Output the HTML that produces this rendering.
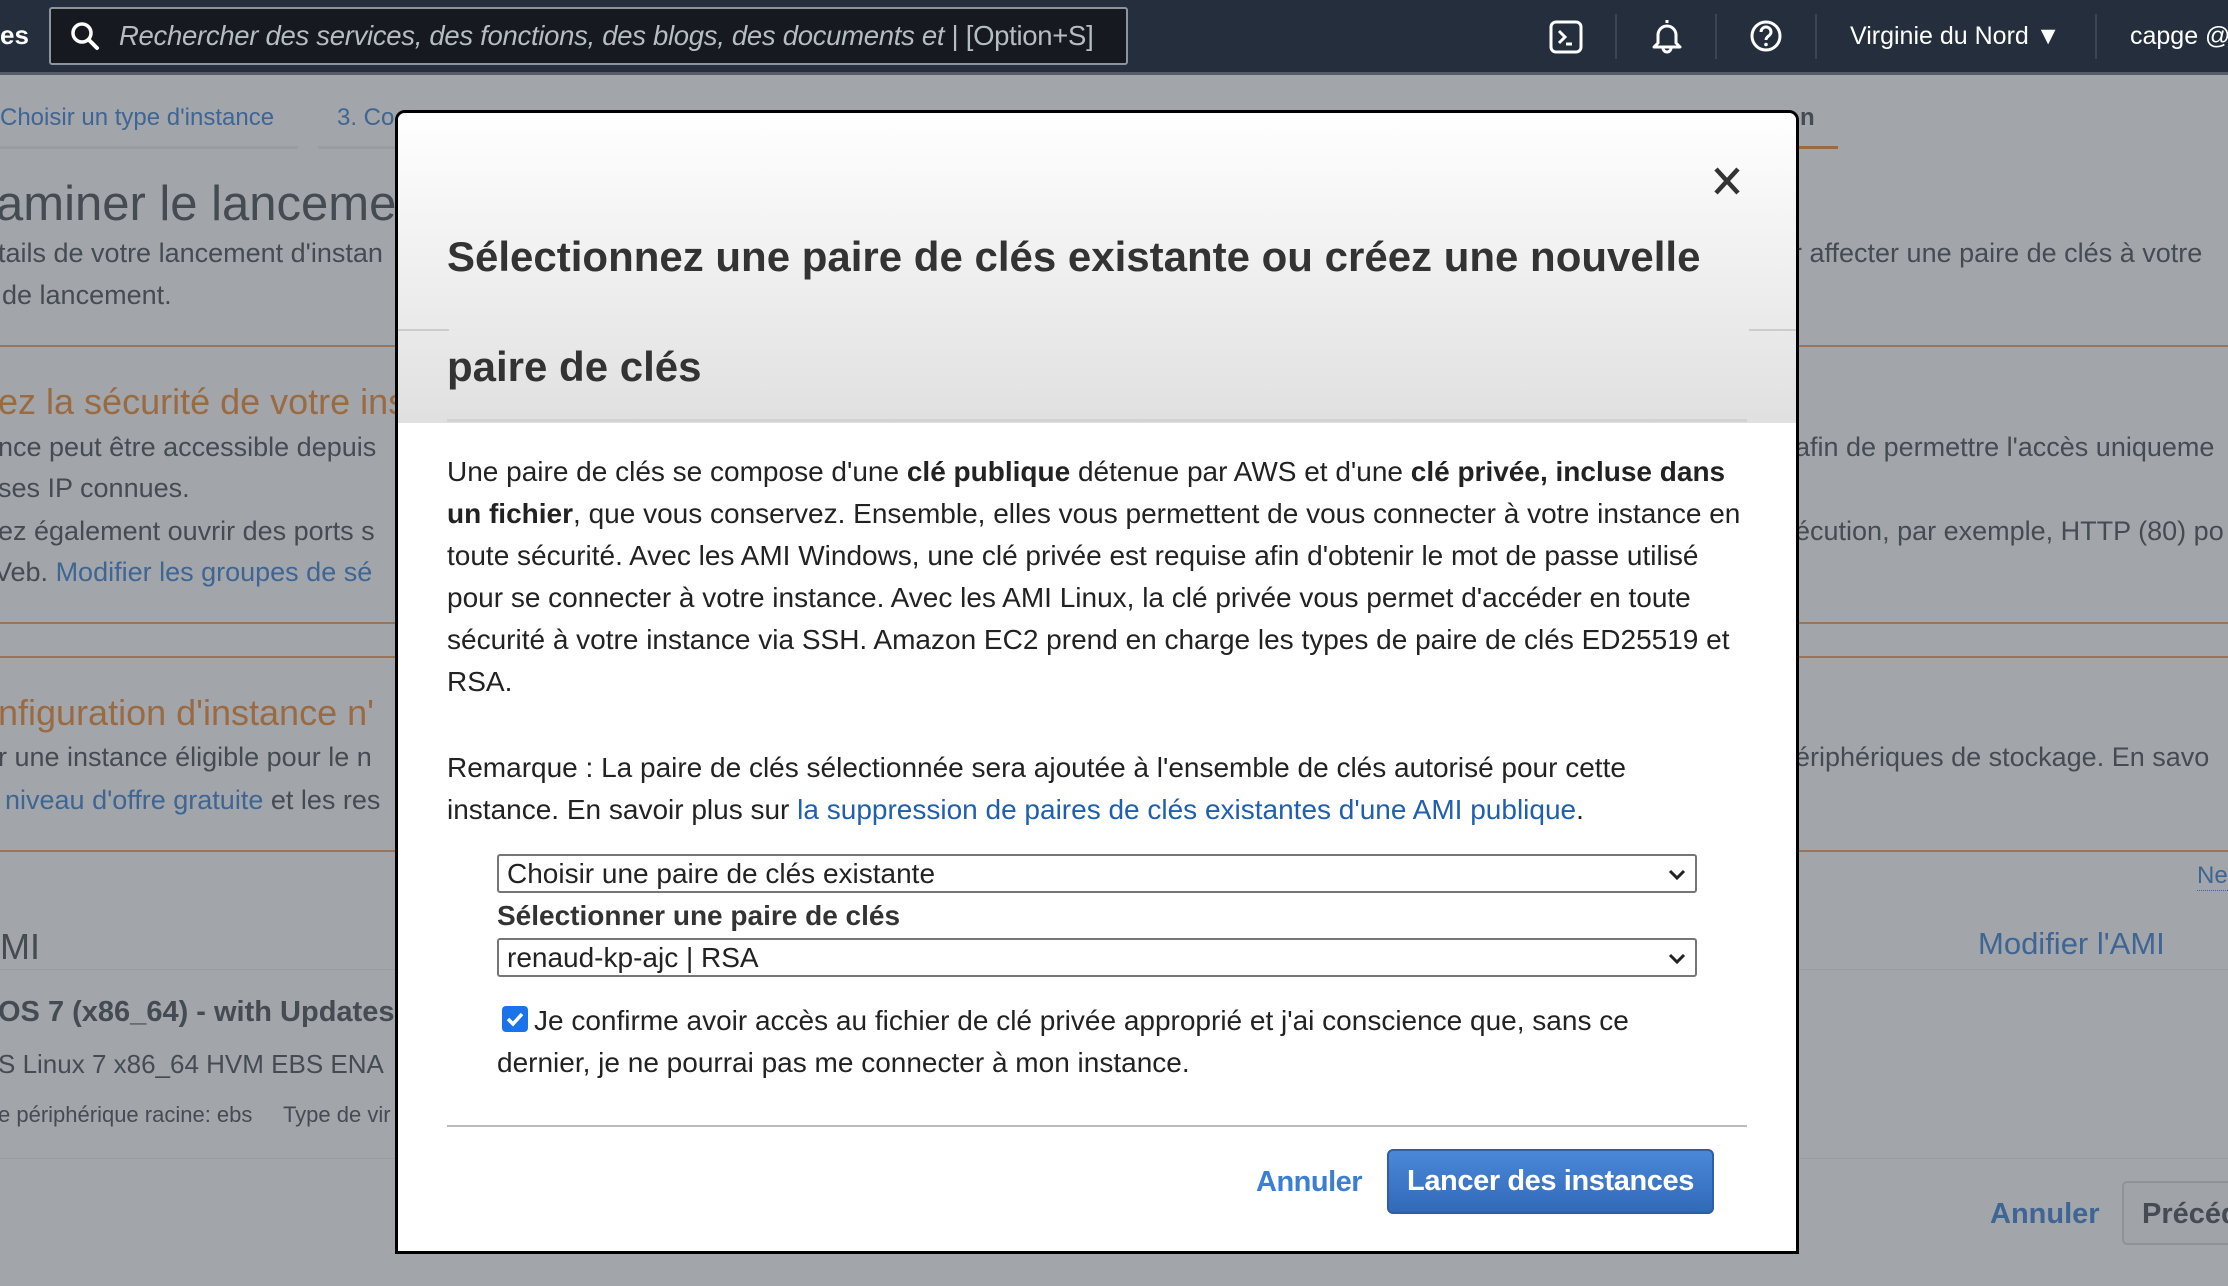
<!DOCTYPE html>
<html><head><meta charset="utf-8"><style>
*{margin:0;padding:0;box-sizing:border-box}
body{width:2228px;height:1286px;overflow:hidden;background:#a2a6aa;font-family:"Liberation Sans",Arial,sans-serif;position:relative}
.a{position:absolute;white-space:nowrap}
.d{color:#454b52}
.l{color:#3e6594}
.o{color:#9a6a42}
.hl{position:absolute;height:2px}
#nav{position:absolute;left:0;top:0;width:2228px;height:75px;background:#242e3d;border-bottom:3px solid #555c66}
.sep{position:absolute;top:14px;width:2px;height:45px;background:#3c4653}
#modal{position:absolute;left:395px;top:110px;width:1404px;height:1144px;background:#fff;border:3px solid #000;border-radius:10px 10px 0 0;overflow:hidden}
#mh{position:absolute;left:0;top:0;width:100%;height:310px;background:linear-gradient(#fff,#e0e0e0)}
.t{font-size:28px;color:#222;line-height:42px}
.sel{position:absolute;left:99px;width:1200px;height:39px;border:2px solid #767676;border-radius:3px;background:#fff;font-size:28px;color:#222;padding-left:8px;line-height:35px}
.sel svg{position:absolute;right:8px;top:12px}
</style></head><body>
<div id="nav">
<div class="a" style="left:0;top:20px;color:#fff;font-size:26px;font-weight:bold">es</div>
<div style="position:absolute;left:49px;top:7px;width:1079px;height:58px;border:2px solid #8d949c;border-radius:3px;background:#16191f"></div>
<svg class="a" style="left:70px;top:21px" width="30" height="30" viewBox="0 0 30 30"><circle cx="12" cy="12" r="9" fill="none" stroke="#fff" stroke-width="3.5"/><path d="M19 19L27 27" stroke="#fff" stroke-width="4" stroke-linecap="round"/></svg>
<div class="a" style="left:119px;top:20px;font-size:27.5px;font-style:italic;color:#b4bcc4;letter-spacing:-0.3px">Rechercher des services, des fonctions, des blogs, des documents et <span style="font-style:normal">|</span> <span style="font-style:normal">[Option+S]</span></div>
<svg class="a" style="left:1549px;top:20px" width="34" height="34" viewBox="0 0 34 34"><rect x="2" y="2" width="30" height="30" rx="5" fill="none" stroke="#fff" stroke-width="3"/><path d="M10 11l6 6-6 6M17 24h6" fill="none" stroke="#fff" stroke-width="3"/></svg>
<div class="sep" style="left:1615px"></div>
<svg class="a" style="left:1650px;top:17px" width="34" height="40" viewBox="0 0 34 40"><path d="M17 3v3M8 26V18a9 9 0 0118 0v8l4 4H4z" fill="none" stroke="#fff" stroke-width="3" stroke-linejoin="round"/><path d="M13 31a4 4 0 008 0" fill="none" stroke="#fff" stroke-width="3"/></svg>
<div class="sep" style="left:1715px"></div>
<svg class="a" style="left:1749px;top:19px" width="34" height="34" viewBox="0 0 34 34"><circle cx="17" cy="17" r="14" fill="none" stroke="#fff" stroke-width="3"/><path d="M12 13a5 5 0 0110 0c0 4-5 4-5 8" fill="none" stroke="#fff" stroke-width="3"/><circle cx="17" cy="25.5" r="1.8" fill="#fff"/></svg>
<div class="sep" style="left:1815px"></div>
<div class="a" style="left:1850px;top:22px;color:#fff;font-size:25px">Virginie du Nord ▼</div>
<div class="sep" style="left:2095px"></div>
<div class="a" style="left:2130px;top:22px;color:#fff;font-size:25px">capge @</div>
</div>

<div class="a l" style="left:0;top:104px;font-size:24px">Choisir un type d'instance</div>
<div class="hl" style="left:0;top:146px;width:298px;background:#999da2;height:3px"></div>
<div class="hl" style="left:318px;top:146px;width:80px;background:#999da2;height:3px"></div>
<div class="a l" style="left:337px;top:104px;font-size:24px">3. Co</div>
<div class="a" style="left:1800px;top:104px;font-size:24px;color:#454b52;font-weight:bold">n</div>
<div class="hl" style="left:1798px;top:146px;width:40px;background:#9a6a42;height:3px"></div>
<div class="a d" style="left:-4px;top:176px;font-size:49px">aminer le lancemen</div>
<div class="a d" style="left:-2px;top:238px;font-size:27px">tails de votre lancement d'instan</div>
<div class="a d" style="left:2px;top:280px;font-size:27px">de lancement.</div>
<div class="a d" style="left:1793px;top:238px;font-size:27px">r affecter une paire de clés à votre</div>
<div class="hl" style="left:0;top:345px;width:2228px;background:#9a7456"></div>
<div class="a o" style="left:-2px;top:381px;font-size:36px">ez la sécurité de votre ins</div>
<div class="a d" style="left:-2px;top:432px;font-size:27px">nce peut être accessible depuis</div>
<div class="a d" style="left:-2px;top:473px;font-size:27px">ses IP connues.</div>
<div class="a d" style="left:-2px;top:516px;font-size:27px">ez également ouvrir des ports s</div>
<div class="a d" style="left:-6px;top:557px;font-size:27px">Veb. <span class="l">Modifier les groupes de sé</span></div>
<div class="a d" style="left:1795px;top:432px;font-size:27px">afin de permettre l'accès uniqueme</div>
<div class="a d" style="left:1795px;top:516px;font-size:27px">écution, par exemple, HTTP (80) po</div>
<div class="hl" style="left:0;top:622px;width:2228px;background:#9a7456"></div>
<div class="hl" style="left:0;top:656px;width:2228px;background:#9a7456"></div>
<div class="a o" style="left:-2px;top:692px;font-size:36px">nfiguration d'instance n'</div>
<div class="a d" style="left:-2px;top:742px;font-size:27px">r une instance éligible pour le n</div>
<div class="a d" style="left:5px;top:785px;font-size:27px"><span class="l">niveau d'offre gratuite</span> et les res</div>
<div class="a d" style="left:1795px;top:742px;font-size:27px">ériphériques de stockage. En savo</div>
<div class="hl" style="left:0;top:850px;width:2228px;background:#9a7456"></div>
<div class="a l" style="left:2197px;top:862px;font-size:24px;border-bottom:1px dotted #3e6594">Ne</div>
<div class="a d" style="left:0;top:926px;font-size:36px">MI</div>
<div class="a l" style="left:1978px;top:926px;font-size:31px">Modifier l'AMI</div>
<div class="hl" style="left:0;top:969px;width:2228px;background:#999da2;height:1px"></div>
<div class="a d" style="left:-2px;top:996px;font-size:29px;font-weight:bold">OS 7 (x86_64) - with Updates</div>
<div class="a d" style="left:-2px;top:1049px;font-size:26px">S Linux 7 x86_64 HVM EBS ENA</div>
<div class="a d" style="left:-2px;top:1102px;font-size:22px">e périphérique racine: ebs &nbsp;&nbsp;&nbsp;&nbsp;Type de vir</div>
<div class="hl" style="left:0;top:1158px;width:2228px;background:#999da2;height:1px"></div>
<div class="a l" style="left:1990px;top:1198px;font-size:29px;font-weight:bold">Annuler</div>
<div style="position:absolute;left:2122px;top:1181px;width:140px;height:64px;border:2px solid #8f9398;border-radius:5px;background:#a0a4a8"></div>
<div class="a d" style="left:2142px;top:1198px;font-size:29px;font-weight:bold">Précéd</div>

<div id="modal">
<div id="mh"></div>
<div class="hl" style="left:0;top:216px;width:51px;background:#ccc"></div>
<div class="hl" style="left:1351px;top:216px;width:53px;background:#ccc"></div>
<div class="hl" style="left:49px;top:306px;width:1300px;background:#d2d2d2;height:3px"></div>
<svg class="a" style="left:1315px;top:53px" width="28" height="30" viewBox="0 0 28 30"><path d="M3 3L25 27M25 3L3 27" stroke="#333" stroke-width="4.5"/></svg>
<div class="a" style="left:49px;top:120px;font-size:42px;font-weight:bold;color:#333">Sélectionnez une paire de clés existante ou créez une nouvelle</div>
<div class="a" style="left:49px;top:230px;font-size:42px;font-weight:bold;color:#333">paire de clés</div>
<div class="t" style="position:absolute;left:49px;top:338px;width:1302px">Une paire de clés se compose d'une <b>clé publique</b> détenue par AWS et d'une <b>clé privée, incluse dans un fichier</b>, que vous conservez. Ensemble, elles vous permettent de vous connecter à votre instance en toute sécurité. Avec les AMI Windows, une clé privée est requise afin d'obtenir le mot de passe utilisé pour se connecter à votre instance. Avec les AMI Linux, la clé privée vous permet d'accéder en toute sécurité à votre instance via SSH. Amazon EC2 prend en charge les types de paire de clés ED25519 et RSA.</div>
<div class="t" style="position:absolute;left:49px;top:634px;width:1270px">Remarque : La paire de clés sélectionnée sera ajoutée à l'ensemble de clés autorisé pour cette instance. En savoir plus sur <span style="color:#1f5fae">la suppression de paires de clés existantes d'une AMI publique</span>.</div>
<div class="sel" style="top:741px">Choisir une paire de clés existante<svg width="20" height="14" viewBox="0 0 20 14"><path d="M3 3l7 7 7-7" fill="none" stroke="#222" stroke-width="3"/></svg></div>
<div class="a" style="left:99px;top:787px;font-size:28px;font-weight:bold;color:#333">Sélectionner une paire de clés</div>
<div class="sel" style="top:825px">renaud-kp-ajc | RSA<svg width="20" height="14" viewBox="0 0 20 14"><path d="M3 3l7 7 7-7" fill="none" stroke="#222" stroke-width="3"/></svg></div>
<div style="position:absolute;left:104px;top:893px;width:26px;height:26px;background:#1a73e8;border-radius:4px"><svg width="26" height="26" viewBox="0 0 26 26"><path d="M6 13l5 5 9-10" fill="none" stroke="#fff" stroke-width="3.5"/></svg></div>
<div class="t" style="position:absolute;left:99px;top:887px;width:1200px;text-indent:37px">Je confirme avoir accès au fichier de clé privée approprié et j'ai conscience que, sans ce dernier, je ne pourrai pas me connecter à mon instance.</div>
<div class="hl" style="left:49px;top:1012px;width:1300px;background:#bbb"></div>
<div class="a" style="left:858px;top:1053px;font-size:29px;font-weight:bold;color:#3b7fd4;letter-spacing:-0.5px">Annuler</div>
<div style="position:absolute;left:989px;top:1036px;width:327px;height:65px;border:2px solid #2c5fa8;border-radius:6px;background:linear-gradient(#4a88d8,#3269b9);color:#fff;font-size:29px;font-weight:bold;text-align:center;line-height:60px;letter-spacing:-0.4px">Lancer des instances</div>
</div>
</body></html>
